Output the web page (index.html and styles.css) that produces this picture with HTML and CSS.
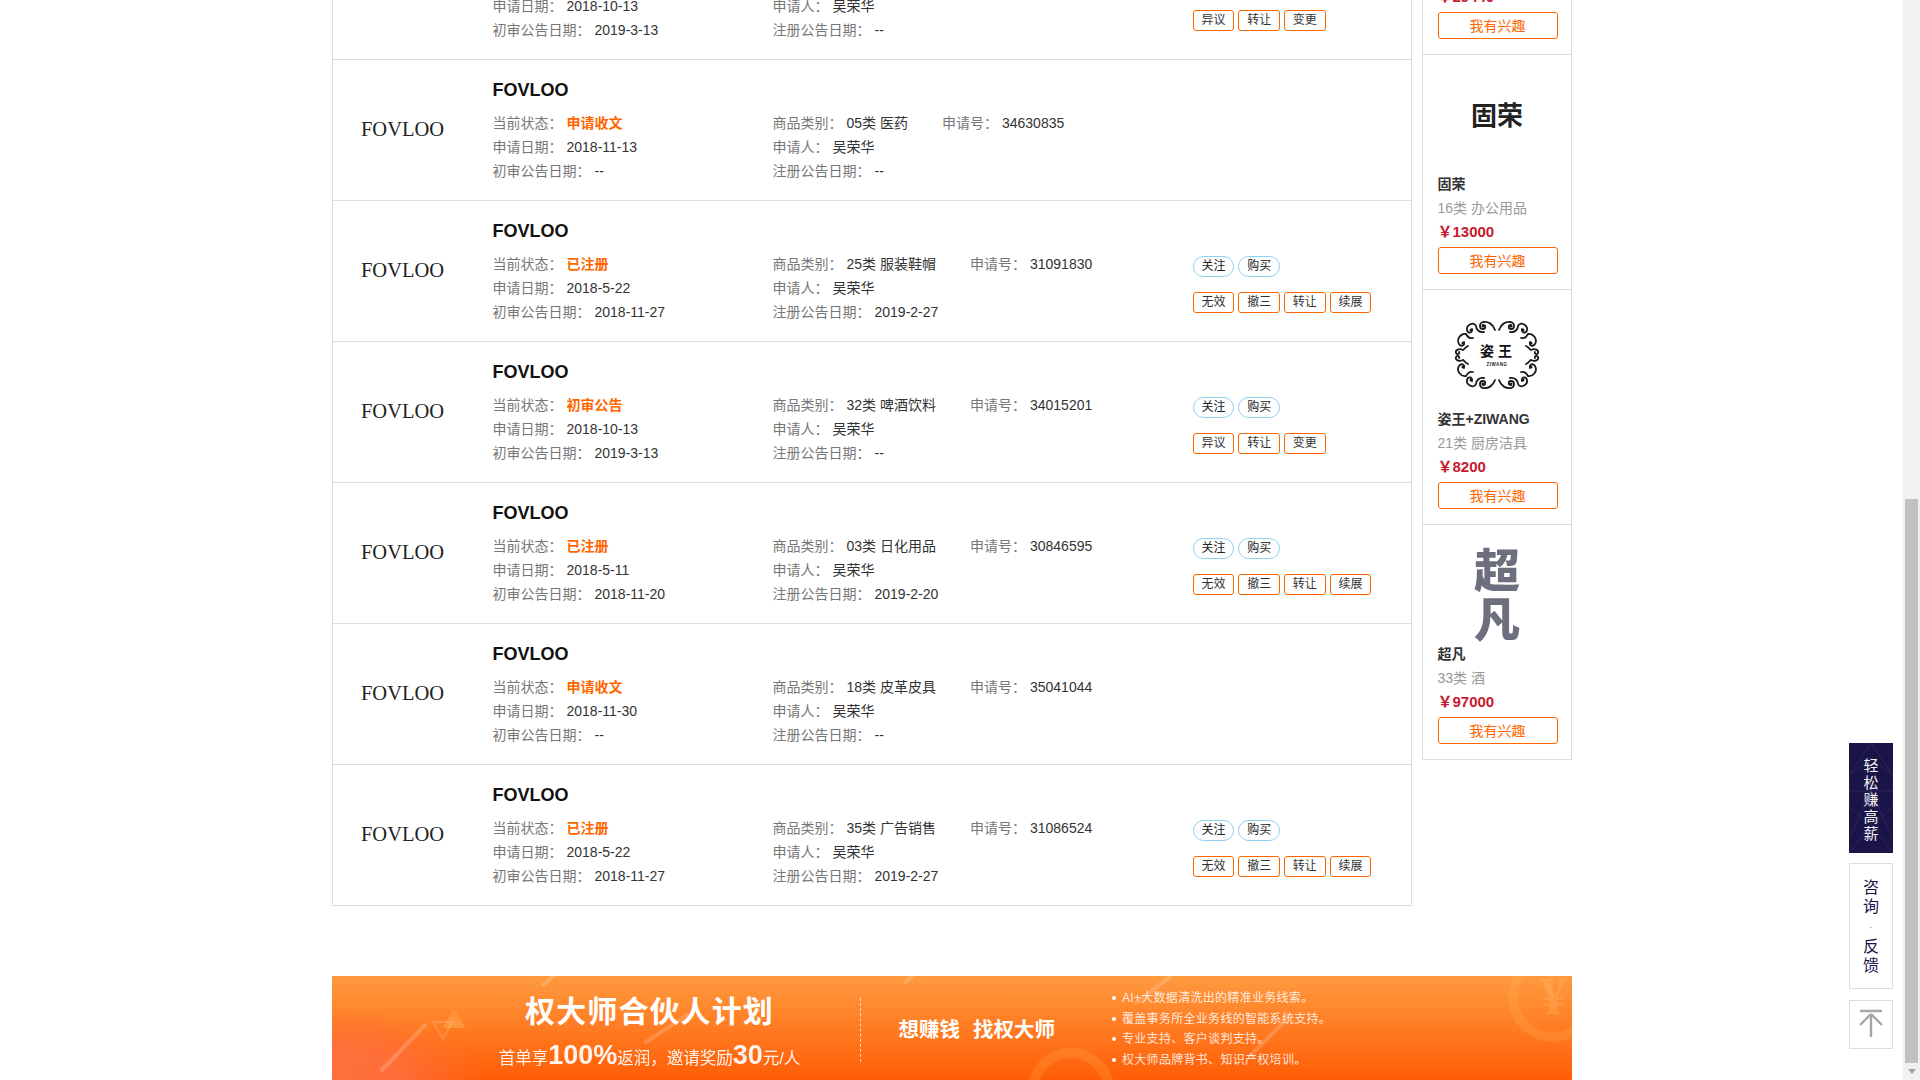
FILE: index.html
```html
<!DOCTYPE html>
<html lang="zh-CN">
<head>
<meta charset="utf-8">
<title>FOVLOO 商标查询</title>
<link rel="stylesheet" href="styles.css">
</head>
<body>
<div class="viewport">
  <div class="page">
    <div class="content">
      <div class="list">

        <div class="row">
          <div class="logo">FOVLOO</div>
          <div class="info">
            <div class="name">FOVLOO</div>
            <div class="line"><div class="cell-a"><span class="lab">当前状态：</span><span class="status">初审公告</span></div><div class="cell-b"><span><span class="lab">商品类别：</span><span class="val">32类 啤酒饮料</span></span><span><span class="lab">申请号：</span><span class="val">34015201</span></span></div></div>
            <div class="line"><div class="cell-a"><span class="lab">申请日期：</span><span class="val">2018-10-13</span></div><div class="cell-b"><span><span class="lab">申请人：</span><span class="val">吴荣华</span></span></div></div>
            <div class="line"><div class="cell-a"><span class="lab">初审公告日期：</span><span class="val">2019-3-13</span></div><div class="cell-b"><span><span class="lab">注册公告日期：</span><span class="val">--</span></span></div></div>
          </div>
          <div class="actions">
            <div class="btns"><span class="btn pill">关注</span><span class="btn pill">购买</span></div>
            <div class="btns"><span class="btn">异议</span><span class="btn">转让</span><span class="btn">变更</span></div>
          </div>
        </div>

        <div class="row">
          <div class="logo">FOVLOO</div>
          <div class="info">
            <div class="name">FOVLOO</div>
            <div class="line"><div class="cell-a"><span class="lab">当前状态：</span><span class="status">申请收文</span></div><div class="cell-b"><span><span class="lab">商品类别：</span><span class="val">05类 医药</span></span><span><span class="lab">申请号：</span><span class="val">34630835</span></span></div></div>
            <div class="line"><div class="cell-a"><span class="lab">申请日期：</span><span class="val">2018-11-13</span></div><div class="cell-b"><span><span class="lab">申请人：</span><span class="val">吴荣华</span></span></div></div>
            <div class="line"><div class="cell-a"><span class="lab">初审公告日期：</span><span class="val">--</span></div><div class="cell-b"><span><span class="lab">注册公告日期：</span><span class="val">--</span></span></div></div>
          </div>
        </div>

        <div class="row">
          <div class="logo">FOVLOO</div>
          <div class="info">
            <div class="name">FOVLOO</div>
            <div class="line"><div class="cell-a"><span class="lab">当前状态：</span><span class="status">已注册</span></div><div class="cell-b"><span><span class="lab">商品类别：</span><span class="val">25类 服装鞋帽</span></span><span><span class="lab">申请号：</span><span class="val">31091830</span></span></div></div>
            <div class="line"><div class="cell-a"><span class="lab">申请日期：</span><span class="val">2018-5-22</span></div><div class="cell-b"><span><span class="lab">申请人：</span><span class="val">吴荣华</span></span></div></div>
            <div class="line"><div class="cell-a"><span class="lab">初审公告日期：</span><span class="val">2018-11-27</span></div><div class="cell-b"><span><span class="lab">注册公告日期：</span><span class="val">2019-2-27</span></span></div></div>
          </div>
          <div class="actions">
            <div class="btns"><span class="btn pill">关注</span><span class="btn pill">购买</span></div>
            <div class="btns"><span class="btn">无效</span><span class="btn">撤三</span><span class="btn">转让</span><span class="btn">续展</span></div>
          </div>
        </div>

        <div class="row">
          <div class="logo">FOVLOO</div>
          <div class="info">
            <div class="name">FOVLOO</div>
            <div class="line"><div class="cell-a"><span class="lab">当前状态：</span><span class="status">初审公告</span></div><div class="cell-b"><span><span class="lab">商品类别：</span><span class="val">32类 啤酒饮料</span></span><span><span class="lab">申请号：</span><span class="val">34015201</span></span></div></div>
            <div class="line"><div class="cell-a"><span class="lab">申请日期：</span><span class="val">2018-10-13</span></div><div class="cell-b"><span><span class="lab">申请人：</span><span class="val">吴荣华</span></span></div></div>
            <div class="line"><div class="cell-a"><span class="lab">初审公告日期：</span><span class="val">2019-3-13</span></div><div class="cell-b"><span><span class="lab">注册公告日期：</span><span class="val">--</span></span></div></div>
          </div>
          <div class="actions">
            <div class="btns"><span class="btn pill">关注</span><span class="btn pill">购买</span></div>
            <div class="btns"><span class="btn">异议</span><span class="btn">转让</span><span class="btn">变更</span></div>
          </div>
        </div>

        <div class="row">
          <div class="logo">FOVLOO</div>
          <div class="info">
            <div class="name">FOVLOO</div>
            <div class="line"><div class="cell-a"><span class="lab">当前状态：</span><span class="status">已注册</span></div><div class="cell-b"><span><span class="lab">商品类别：</span><span class="val">03类 日化用品</span></span><span><span class="lab">申请号：</span><span class="val">30846595</span></span></div></div>
            <div class="line"><div class="cell-a"><span class="lab">申请日期：</span><span class="val">2018-5-11</span></div><div class="cell-b"><span><span class="lab">申请人：</span><span class="val">吴荣华</span></span></div></div>
            <div class="line"><div class="cell-a"><span class="lab">初审公告日期：</span><span class="val">2018-11-20</span></div><div class="cell-b"><span><span class="lab">注册公告日期：</span><span class="val">2019-2-20</span></span></div></div>
          </div>
          <div class="actions">
            <div class="btns"><span class="btn pill">关注</span><span class="btn pill">购买</span></div>
            <div class="btns"><span class="btn">无效</span><span class="btn">撤三</span><span class="btn">转让</span><span class="btn">续展</span></div>
          </div>
        </div>

        <div class="row">
          <div class="logo">FOVLOO</div>
          <div class="info">
            <div class="name">FOVLOO</div>
            <div class="line"><div class="cell-a"><span class="lab">当前状态：</span><span class="status">申请收文</span></div><div class="cell-b"><span><span class="lab">商品类别：</span><span class="val">18类 皮革皮具</span></span><span><span class="lab">申请号：</span><span class="val">35041044</span></span></div></div>
            <div class="line"><div class="cell-a"><span class="lab">申请日期：</span><span class="val">2018-11-30</span></div><div class="cell-b"><span><span class="lab">申请人：</span><span class="val">吴荣华</span></span></div></div>
            <div class="line"><div class="cell-a"><span class="lab">初审公告日期：</span><span class="val">--</span></div><div class="cell-b"><span><span class="lab">注册公告日期：</span><span class="val">--</span></span></div></div>
          </div>
        </div>

        <div class="row">
          <div class="logo">FOVLOO</div>
          <div class="info">
            <div class="name">FOVLOO</div>
            <div class="line"><div class="cell-a"><span class="lab">当前状态：</span><span class="status">已注册</span></div><div class="cell-b"><span><span class="lab">商品类别：</span><span class="val">35类 广告销售</span></span><span><span class="lab">申请号：</span><span class="val">31086524</span></span></div></div>
            <div class="line"><div class="cell-a"><span class="lab">申请日期：</span><span class="val">2018-5-22</span></div><div class="cell-b"><span><span class="lab">申请人：</span><span class="val">吴荣华</span></span></div></div>
            <div class="line"><div class="cell-a"><span class="lab">初审公告日期：</span><span class="val">2018-11-27</span></div><div class="cell-b"><span><span class="lab">注册公告日期：</span><span class="val">2019-2-27</span></span></div></div>
          </div>
          <div class="actions">
            <div class="btns"><span class="btn pill">关注</span><span class="btn pill">购买</span></div>
            <div class="btns"><span class="btn">无效</span><span class="btn">撤三</span><span class="btn">转让</span><span class="btn">续展</span></div>
          </div>
        </div>

      </div>

      <div class="side">
        <div class="card">
          <div class="pic"></div>
          <div class="c-name">商标</div>
          <div class="c-cat">09类 科学仪器</div>
          <div class="c-price">￥29440</div>
          <div class="c-btn">我有兴趣</div>
        </div>
        <div class="card">
          <div class="pic"><span class="pic-text">固荣</span></div>
          <div class="c-name">固荣</div>
          <div class="c-cat">16类 办公用品</div>
          <div class="c-price">￥13000</div>
          <div class="c-btn">我有兴趣</div>
        </div>
        <div class="card">
          <div class="pic">
            <svg class="wreath" viewBox="-42 -35 84 70" aria-hidden="true">
              <defs>
                <g id="quarter">
                  <path d="M2 -25C4 -31 9 -34 14 -33C18 -32 18 -26 14 -26C11 -26 11 -30 14 -30"/>
                  <path d="M13 -23C18 -22 21 -26 21 -29C23 -34 31 -30 30 -25C29 -21 24 -22 25 -26"/>
                  <path d="M24 -17C28 -16 30 -19 31 -21C36 -22 41 -16 38 -11C36 -8 32 -9 33 -13"/>
                  <path d="M29 -9C33 -7 33 -5 34 -5C38 -7 42 -5 41 -2C40 0 37 -1 38 -3"/>
                  <circle class="dot" cx="14" cy="-29" r="1.5"/>
                  <circle class="dot" cx="26" cy="-25" r="1.5"/>
                  <circle class="dot" cx="34" cy="-12" r="1.5"/>
                </g>
              </defs>
              <g class="curls">
                <use href="#quarter"/>
                <use href="#quarter" transform="scale(-1 1)"/>
                <use href="#quarter" transform="scale(1 -1)"/>
                <use href="#quarter" transform="scale(-1 -1)"/>
              </g>
              <text class="w-big" x="1" y="1" text-anchor="middle">姿王</text>
              <text class="w-small" x="0" y="11" text-anchor="middle">ZIWANG</text>
            </svg>
          </div>
          <div class="c-name">姿王+ZIWANG</div>
          <div class="c-cat">21类 厨房洁具</div>
          <div class="c-price">￥8200</div>
          <div class="c-btn">我有兴趣</div>
        </div>
        <div class="card">
          <div class="pic"><div class="brush"><div class="brush-a">超</div><div class="brush-b">凡</div></div></div>
          <div class="c-name">超凡</div>
          <div class="c-cat">33类 酒</div>
          <div class="c-price">￥97000</div>
          <div class="c-btn">我有兴趣</div>
        </div>
      </div>
    </div>

    <div class="banner">
      <svg class="b-decor" viewBox="0 0 1240 104" aria-hidden="true">
        <g class="b-lines">
          <path d="M50 94L93 49"/>
          <path d="M211 9L225 -3"/>
          <path d="M314 66L355 39"/>
          <path d="M574 6L584 -4"/>
          <path d="M804 27L838 1"/>
          <path d="M919 79L952 46"/>
        </g>
        <path class="b-tri" d="M122 35L132 51H112Z"/>
        <path class="b-tri-o" d="M101 46H120L111 63Z"/>
        <circle class="b-ring" cx="739" cy="115" r="38"/>
        <circle class="b-ring" cx="1221" cy="21" r="40"/>
        <text class="b-yen" x="1221" y="38" text-anchor="middle">¥</text>
      </svg>
      <div class="b-plan">
        <div class="b-title">权大师合伙人计划</div>
        <div class="b-sub">首单享<b>100%</b>返润，邀请奖励<b>30</b>元/人</div>
      </div>
      <div class="b-dash"></div>
      <div class="b-slogan"><span>想赚钱</span><span>找权大师</span></div>
      <ul class="b-list">
        <li>AI+大数据清洗出的精准业务线索。</li>
        <li>覆盖事务所全业务线的智能系统支持。</li>
        <li>专业支持、客户谈判支持。</li>
        <li>权大师品牌背书、知识产权培训。</li>
      </ul>
    </div>
  </div>

  <div class="float">
    <div class="f-earn">
      <svg class="f-hex" viewBox="0 0 44 110" aria-hidden="true">
        <path d="M0 48H44M22 15L44 32V64L22 81L0 64V32ZM22 48L44 96M22 48L0 96M22 81L44 110M22 81L0 110M0 32L22 0L44 32"/>
      </svg>
      <span class="f-earn-text">轻<br>松<br>赚<br>高<br>薪</span>
    </div>
    <div class="f-ask"><span>咨<br>询<br><i>·</i><br>反<br>馈</span></div>
    <div class="f-top">
      <svg class="f-arrow" viewBox="0 0 42 47" aria-hidden="true">
        <path d="M10 10H32M21 13L10 24M21 13L32 24M21 13V36"/>
      </svg>
    </div>
  </div>
</div>

<div class="scrollbar">
  <div class="sb-upper"></div>
  <div class="sb-thumb"></div>
  <div class="sb-arrow"></div>
</div>
</body>
</html>
```

FILE: styles.css
```css
* { box-sizing: border-box; }
html, body { margin: 0; height: 1080px; overflow: hidden; background: #fff; }
body {
  display: flex;
  font-family: "Liberation Sans", "Noto Sans CJK SC", sans-serif;
  font-size: 14px;
  color: #333;
}
.viewport { position: relative; flex: 1; min-width: 0; height: 1080px; overflow: hidden; }
.page { width: 1240px; margin: -181px auto 0; }
.content { display: flex; gap: 10px; align-items: flex-start; }

/* trademark list */
.list {
  width: 1080px;
  margin-top: 100px;
  border-left: 1px solid #ddd;
  border-right: 1px solid #ddd;
}
.row { display: flex; height: 141px; border-bottom: 1px solid #ddd; }
.logo {
  width: 140px;
  flex: none;
  align-self: center;
  margin-top: -2px;
  text-align: center;
  font-family: "Liberation Serif", serif;
  font-size: 20.5px;
  line-height: 24px;
  color: #222;
}
.info { width: 720.2px; flex: none; padding: 12px 0 0 20px; }
.name {
  font-size: 18px;
  font-weight: bold;
  line-height: 36px;
  margin-bottom: 3px;
  color: #111;
}
.line { display: flex; line-height: 24px; }
.cell-a { width: 280px; flex: none; }
.cell-b { display: flex; gap: 34px; }
.lab { color: #777; margin-right: 4px; }
.val { color: #333; }
.status { color: #ff6600; font-weight: bold; }

.actions { padding-top: 55px; display: flex; flex-direction: column; gap: 15px; }
.btns { display: flex; gap: 4px; }
.btn {
  width: 41.67px;
  height: 21px;
  border: 1px solid #ff6600;
  border-radius: 3px;
  font-size: 12px;
  line-height: 18px;
  text-align: center;
  color: #333;
}
.btn.pill { border-color: #8ed0ef; border-radius: 11px; color: #222; }

/* recommendations */
.side {
  width: 150px;
  flex: none;
  margin-top: 1px;
  border-left: 1px solid #ddd;
  border-right: 1px solid #ddd;
}
.card { height: 235px; padding: 0 14px 0 15px; border-bottom: 1px solid #ddd; }
.pic { height: 117px; display: flex; align-items: center; justify-content: center; }
.pic-text { font-size: 26px; font-weight: bold; color: #222; }
.wreath { width: 84px; height: 70px; margin-top: 12px; }
.curls { fill: none; stroke: #1a1a1a; stroke-width: 1.8; stroke-linecap: round; }
.dot { fill: #1a1a1a; stroke: none; }
.w-big { font-size: 14px; font-weight: 700; letter-spacing: 4px; fill: #111; font-family: "Noto Sans CJK SC", sans-serif; }
.w-small { font-size: 4.5px; font-weight: bold; letter-spacing: .5px; fill: #222; }
.brush {
  margin-top: 14px;
  font-family: "Noto Sans CJK SC", sans-serif;
  font-weight: 900;
  text-align: center;
  color: #6d6e7e;
  filter: blur(.4px);
}
.brush-a { height: 50px; font-size: 46px; line-height: 50px; }
.brush-b { height: 48px; font-size: 46px; line-height: 48px; }
.c-name { font-weight: bold; line-height: 24px; color: #333; white-space: nowrap; }
.c-cat { line-height: 24px; color: #999; white-space: nowrap; }
.c-price { font-size: 15px; font-weight: bold; line-height: 24px; color: #c8192e; }
.c-btn {
  width: 120px;
  height: 27px;
  margin-top: 3px;
  border: 1px solid #ff6600;
  border-radius: 3px;
  line-height: 26px;
  text-align: center;
  color: #ff6600;
}

/* banner */
.banner {
  position: relative;
  display: flex;
  align-items: flex-start;
  height: 104px;
  margin-top: 70px;
  overflow: hidden;
  color: #fff;
  background:
    radial-gradient(ellipse 150px 70px at 0 104px, #ff7040 0%, rgba(255,112,64,.85) 45%, rgba(255,112,64,0) 100%),
    linear-gradient(#ff9a3f, #ff5d06);
}
.b-decor { position: absolute; left: 0; top: 0; width: 1240px; height: 104px; }
.b-lines { fill: none; stroke: rgba(255,255,255,.18); stroke-width: 4; stroke-linecap: round; }
.b-tri { fill: #ff963c; stroke: #ff963c; stroke-width: 2; stroke-linejoin: round; }
.b-tri-o { fill: none; stroke: rgba(255,255,255,.16); stroke-width: 2; }
.b-ring { fill: none; stroke: rgba(255,190,90,.2); stroke-width: 10; }
.b-yen { font-family: "Liberation Serif", serif; font-size: 52px; font-weight: bold; fill: rgba(255,200,120,.25); }
.b-plan { position: relative; width: 320px; margin-left: 158px; padding-top: 16px; text-align: center; white-space: nowrap; }
.b-title { font-size: 30px; font-weight: bold; line-height: 40px; letter-spacing: 1.1px; }
.b-sub { margin-top: 3px; font-size: 16.5px; line-height: 40px; opacity: .92; }
.b-sub b { font-size: 27px; font-weight: bold; }
.b-dash { position: relative; height: 64px; margin: 22px 0 0 50px; border-left: 1px dashed rgba(255,255,255,.7); }
.b-slogan { position: relative; display: flex; gap: 13px; margin: 40px 0 0 38px; font-size: 20.5px; font-weight: bold; line-height: 28px; white-space: nowrap; }
.b-list {
  position: relative;
  margin: 12px 0 0 57px;
  padding: 0 0 0 10px;
  list-style: none;
  font-size: 12px;
  letter-spacing: .3px;
  line-height: 20.5px;
  color: rgba(255,255,255,.85);
  white-space: nowrap;
}
.b-list li { position: relative; }
.b-list li::before {
  content: "";
  position: absolute;
  left: -10px;
  top: 8px;
  width: 4px;
  height: 4px;
  border-radius: 50%;
  background: #fff;
}

/* floating tools */
.float { position: absolute; right: 10px; top: 743px; width: 44px; }
.f-earn {
  position: relative;
  display: flex;
  align-items: center;
  justify-content: center;
  height: 110px;
  padding-top: 3px;
  background: #1a1449;
  overflow: hidden;
}
.f-hex { position: absolute; left: 0; top: 0; width: 44px; height: 110px; fill: none; stroke: rgba(255,255,255,.08); stroke-width: 1; }
.f-earn-text { position: relative; font-size: 15px; line-height: 17px; text-align: center; color: #f2f2f2; }
.f-ask {
  display: flex;
  align-items: center;
  justify-content: center;
  height: 126px;
  margin-top: 10px;
  border: 1px solid #ddd;
  font-size: 16px;
  line-height: 19px;
  text-align: center;
  color: #1a1449;
}
.f-ask i { font-style: normal; font-size: 10px; color: #888; }
.f-top { height: 49px; margin-top: 11px; border: 1px solid #ddd; }
.f-arrow { display: block; width: 42px; height: 47px; fill: none; stroke: #a6a6a6; stroke-width: 2.4; }

/* scrollbar */
.scrollbar { width: 17px; height: 1080px; flex: none; display: flex; flex-direction: column; align-items: center; background: #f1f1f1; }
.sb-upper { height: 499px; }
.sb-thumb { width: 13px; height: 564px; background: #c1c1c1; }
.sb-arrow { margin-top: 6px; width: 0; height: 0; border-left: 4px solid transparent; border-right: 4px solid transparent; border-top: 5px solid #a3a3a3; }
```
